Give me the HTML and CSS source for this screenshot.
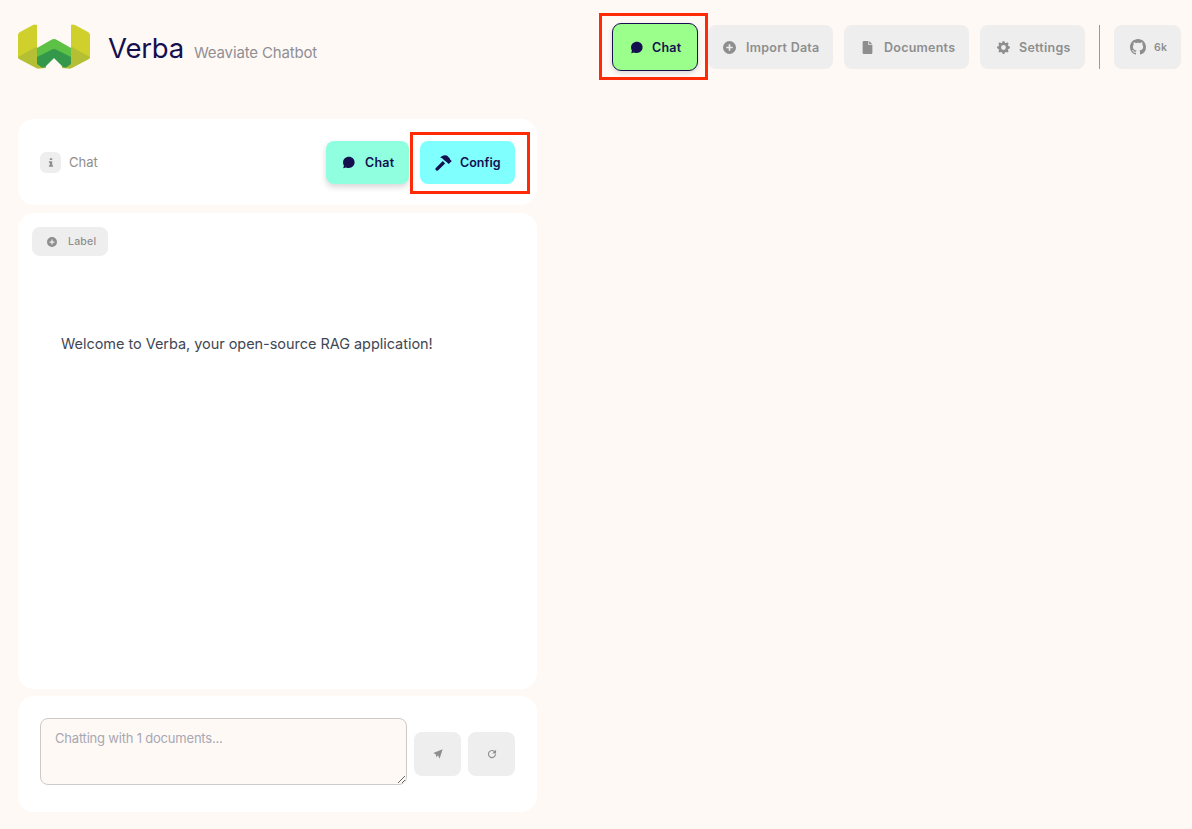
FILE: index.html
```html
<!DOCTYPE html>
<html lang="en">
<head>
<meta charset="utf-8">
<title>Verba</title>
<link rel="stylesheet" href="styles.css">
</head>
<body>
<header class="header">
  <div class="brand">
    <svg class="logo" viewBox="0 0 72 46" aria-hidden="true">
      <path fill="#CFD02B" d="M0 11Q0 9 2 8L15 1Q17 0 19 1L19 24L0 34Z"/>
      <path fill="#CFD02B" d="M72 11Q72 9 70 8L57 1Q55 0 53 1L53 24L72 34Z"/>
      <path fill="#B4BF34" d="M0 33L18 23L28 29L28 44L22 44.500Q20 45 18 44L1 35Q0 34.500 0 33Z"/>
      <path fill="#B4BF34" d="M72 33L54 23L44 29L44 44L50 44.500Q52 45 54 44L71 35Q72 34.500 72 33Z"/>
      <path fill="#5CC144" d="M19 24L33 16Q36 14 39 16L53 24L53 40L36 34L19 40Z"/>
      <path fill="#33984A" d="M19 33L33 26Q36 24 39 26L53 33L53 40L49 43Q47 44 45 43L36 34L27 43Q25 44 23 43L19 40Z"/>
    </svg>
    <span class="brand-name">Verba</span>
    <span class="brand-sub">Weaviate Chatbot</span>
  </div>
  <nav class="nav">
    <button class="btn nav-chat marked marked-nav">
      <svg class="ico" viewBox="0 0 16 16"><use href="#i-chat"/></svg>Chat
    </button>
    <button class="btn nav-import">
      <svg class="ico" viewBox="0 0 16 16"><use href="#i-plus"/></svg>Import Data
    </button>
    <button class="btn nav-docs">
      <svg class="ico" viewBox="0 0 16 16"><use href="#i-file"/></svg>Documents
    </button>
    <button class="btn nav-settings">
      <svg class="ico" viewBox="0 0 16 16"><use href="#i-gear"/></svg>Settings
    </button>
    <span class="divider"></span>
    <button class="btn nav-git">
      <svg class="ico-git" viewBox="0 0 16 16"><path fill="currentColor" d="M8 0C3.58 0 0 3.58 0 8c0 3.54 2.29 6.53 5.47 7.59.4.07.55-.17.55-.38 0-.19-.01-.82-.01-1.49-2.01.37-2.53-.49-2.69-.94-.09-.23-.48-.94-.82-1.13-.28-.15-.68-.52-.01-.53.63-.01 1.08.58 1.23.82.72 1.21 1.87.87 2.33.66.07-.52.28-.87.51-1.07-1.78-.2-3.64-.89-3.64-3.95 0-.87.31-1.59.82-2.15-.08-.2-.36-1.02.08-2.12 0 0 .67-.21 2.2.82.64-.18 1.32-.27 2-.27.68 0 1.36.09 2 .27 1.53-1.04 2.2-.82 2.2-.82.44 1.1.16 1.92.08 2.12.51.56.82 1.27.82 2.15 0 3.07-1.87 3.75-3.65 3.95.29.25.54.73.54 1.48 0 1.07-.01 1.93-.01 2.2 0 .21.15.46.55.38A8.013 8.013 0 0016 8c0-4.42-3.58-8-8-8z"/></svg>6k
    </button>
  </nav>
</header>

<main class="column">
  <section class="card card-head">
    <div class="head-left">
      <span class="info-box"><svg class="ico-info" viewBox="0 0 10 14"><path fill="currentColor" d="M3 0h4v3H3zM1.500 5H7v6.500h1.500V14h-7v-2.500H3V7.500H1.500z"/></svg></span>
      <span class="head-title">Chat</span>
    </div>
    <div class="head-tabs">
      <button class="btn tab tab-chat">
        <svg class="ico" viewBox="0 0 16 16"><use href="#i-chat"/></svg>Chat
      </button>
      <button class="btn tab tab-config marked marked-config">
        <svg class="ico-hammer" viewBox="0 0 16 16"><path fill="currentColor" d="M0.800 13.200L7.300 6.700L9.500 8.900L3 15.400Q2 16.200 1 15.300L.6 14.900Q0 14 .8 13.200ZM4.800 3.200Q8 .4 11 1.400L11.500 1.700L14 4.200L14.200 5.200L15.800 6.600L12.900 9.500L11.400 8L10.800 7.600L8.400 5.600Q7 3.600 4.800 3.200Z"/></svg>Config
      </button>
    </div>
  </section>

  <section class="card card-body">
    <button class="btn label-btn">
      <svg class="ico-small" viewBox="0 0 16 16"><use href="#i-plus"/></svg><span class="label-text">Label</span>
    </button>
    <p class="welcome">Welcome to Verba, your open-source RAG application!</p>
  </section>

  <section class="card card-input">
    <textarea class="input" placeholder="Chatting with 1 documents..."></textarea>
    <button class="btn square">
      <svg class="ico-small" viewBox="0 0 16 16"><path fill="currentColor" d="M15.500.500L10.500 15.500L8 10L5 13L4.500 8.500L.500 6.500Z"/></svg>
    </button>
    <button class="btn square">
      <svg class="ico-small" viewBox="0 0 16 16"><path fill="none" stroke="currentColor" stroke-width="1.800" d="M12.800 5A5.700 5.700 0 1 0 13.700 8.500"/><path fill="currentColor" d="M14.500 1v6h-6z"/></svg>
    </button>
  </section>
</main>

<svg class="defs" aria-hidden="true">
  <defs>
    <symbol id="i-chat" viewBox="0 0 16 16"><path fill="currentColor" d="M8.500 1C12.500 1 15.500 3.900 15.500 7.800C15.500 11.800 12.400 14.800 8.500 14.800C7.200 14.800 6 14.500 5 14L1.500 15L2.400 11.800C1.600 10.600 1.300 9.300 1.300 7.900C1.300 3.900 4.500 1 8.500 1Z"/></symbol>
    <symbol id="i-plus" viewBox="0 0 16 16"><path fill="currentColor" fill-rule="evenodd" d="M8 0a8 8 0 1 1 0 16A8 8 0 0 1 8 0ZM7 4v3H4v2h3v3h2V9h3V7H9V4Z"/></symbol>
    <symbol id="i-file" viewBox="0 0 16 16"><path fill="currentColor" d="M3.500 0H9V5H14V14.500Q14 16 12.500 16H3.500Q2 16 2 14.500V1.500Q2 0 3.500 0ZM10 0L14 4H10Z"/></symbol>
    <symbol id="i-gear" viewBox="0 0 16 16"><path fill="currentColor" d="M9.405 1.050c-.413-1.400-2.397-1.400-2.810 0l-.100.340a1.464 1.464 0 0 1-2.105.872l-.310-.170c-1.283-.698-2.686.705-1.987 1.987l.169.311c.446.820.023 1.841-.872 2.105l-.340.100c-1.400.413-1.400 2.397 0 2.810l.340.100a1.464 1.464 0 0 1 .872 2.105l-.170.310c-.698 1.283.705 2.686 1.987 1.987l.311-.169a1.464 1.464 0 0 1 2.105.872l.100.340c.413 1.400 2.397 1.400 2.810 0l.100-.340a1.464 1.464 0 0 1 2.105-.872l.310.170c1.283.698 2.686-.705 1.987-1.987l-.169-.311a1.464 1.464 0 0 1 .872-2.105l.340-.100c1.400-.413 1.400-2.397 0-2.810l-.340-.100a1.464 1.464 0 0 1-.872-2.105l.170-.310c.698-1.283-.705-2.686-1.987-1.987l-.311.169a1.464 1.464 0 0 1-2.105-.872l-.100-.340zM8 10.930a2.929 2.929 0 1 1 0-5.858 2.929 2.929 0 0 1 0 5.858z"/></symbol>
  </defs>
</svg>
</body>
</html>
```
FILE: styles.css
```css
* { box-sizing: border-box; }

html, body { height: 100%; }

body {
  margin: 0;
  background: #fff9f6;
  color: #8e8e8e;
  font-family: Inter, "Liberation Sans", sans-serif;
  overflow: hidden;
}

.defs { display: none; }

.header {
  height: 94px;
  padding: 0 11px 0 18px;
  display: flex;
  align-items: center;
  justify-content: space-between;
}

.brand { display: flex; align-items: center; }

.logo { width: 72px; height: 46px; display: block; }

.brand-name {
  margin-left: 18px;
  margin-top: 2px;
  font-size: 27.500px;
  line-height: 34px;
  color: #14104f;
  letter-spacing: -0.2px;
}

.brand-sub {
  margin-left: 10px;
  margin-top: 11px;
  font-size: 15px;
  line-height: 20px;
  color: #8f8e94;
  letter-spacing: -0.15px;
}

.nav { display: flex; align-items: center; }

.btn {
  border: 0;
  border-radius: 8px;
  background: #eeeeee;
  color: #8e8e8e;
  font: 600 12.500px Inter, "Liberation Sans", sans-serif;
  letter-spacing: 0.02em;
  display: flex;
  align-items: center;
  padding: 0;
  height: 44px;
  position: relative;
}

.ico { width: 13px; height: 13px; flex: none; color: inherit; }

.nav-chat {
  width: 86px;
  height: 48px;
  padding-left: 17px;
  gap: 9px;
  background: #9aff8b;
  color: #14104f;
  border: 1px solid #14104f;
  border-radius: 9px;
  box-shadow: 0 2px 5px rgba(0, 0, 0, 0.14);
  margin-right: 10px;
}

.nav-import { width: 125px; padding-left: 15px; gap: 10px; margin-right: 11px; }

.nav-docs { width: 125px; padding-left: 17px; gap: 10px; margin-right: 11px; }

.nav-settings { width: 105px; padding-left: 17px; gap: 9px; margin-right: 14px; }

.divider { width: 1px; height: 44px; background: #9c9996; margin-right: 14px; }

.nav-git { width: 67px; padding-left: 16px; gap: 8px; font-size: 10.500px; }

.ico-git { width: 16px; height: 16px; flex: none; }

.marked::after {
  content: "";
  position: absolute;
  border: 3px solid #ff2a06;
  pointer-events: none;
}

.marked-nav::after { inset: -11px -11px -10px -14px; }

.marked-config::after { inset: -9px -15px -10px -10px; }

.column { width: 519px; margin: 25px 0 0 18px; display: flex; flex-direction: column; }

.card { background: #fff; border-radius: 16px; }

.card-head {
  height: 86px;
  margin-bottom: 8px;
  padding: 0 22px;
  display: flex;
  align-items: center;
  justify-content: space-between;
}

.head-left { display: flex; align-items: center; gap: 8px; }

.info-box {
  width: 21px;
  height: 21px;
  border-radius: 6px;
  background: #eeeeee;
  display: flex;
  align-items: center;
  justify-content: center;
  color: #8e8e8e;
}

.ico-info { width: 6px; height: 9px; }

.head-title { font-size: 13px; color: #8e8e8e; }

.head-tabs { display: flex; gap: 11px; }

.tab { height: 43px; color: #14104f; }

.tab-chat {
  width: 83px;
  padding-left: 16px;
  gap: 10px;
  background: #8fffe0;
  box-shadow: 0 3px 6px rgba(0, 0, 0, 0.16);
}

.tab-config {
  width: 95px;
  padding-left: 15px;
  gap: 8px;
  background: #80ffff;
  letter-spacing: 0;
}

.ico-hammer { width: 17px; height: 17px; flex: none; }

.card-body { height: 476px; margin-bottom: 7px; padding: 14px; }

.label-btn {
  width: 76px;
  height: 29px;
  padding-left: 15px;
  gap: 11px;
  font-size: 10.500px;
  font-weight: 500;
}

.label-text { margin-top: -1px; }

.ico-small { width: 10px; height: 10px; flex: none; }

.welcome {
  margin: 78px 0 0 29px;
  font-size: 14.500px;
  line-height: 20px;
  color: #414754;
  letter-spacing: -0.04px;
}

.card-input {
  height: 116px;
  padding: 22px;
  display: flex;
  align-items: center;
  gap: 7px;
}

.input {
  width: 367px;
  height: 67px;
  flex: none;
  margin-top: -5px;
  padding: 11px 14px;
  border: 1px solid #cdcaca;
  border-radius: 8px;
  background: #fff9f6;
  font: 13px Inter, "Liberation Sans", sans-serif;
  letter-spacing: -0.2px;
  outline: 0;
}

.input::placeholder { color: #a6a8b3; opacity: 1; }

.square { width: 47px; justify-content: center; }
```
